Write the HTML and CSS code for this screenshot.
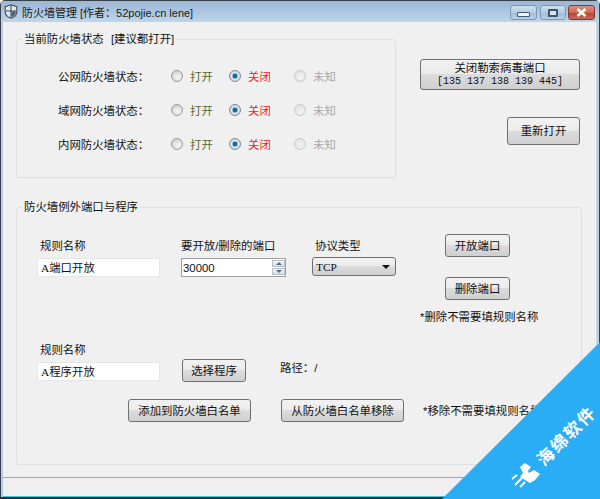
FILE: index.html
```html
<!DOCTYPE html>
<html lang="zh-CN">
<head>
  <meta charset="UTF-8" />
  <title>防火墙管理</title>
  <link rel="stylesheet" href="styles.css">
</head>
<body>
  <div class="window">
    <div class="titlebar">
      <svg class="app-icon" width="14" height="15" viewBox="0 0 14 15">
        <path d="M7 .8 L12.8 2.6 V8 C12.8 11 10 13.2 7 14.2 C4 13.2 1.2 11 1.2 8 V2.6 Z" fill="#dfe7ef" stroke="#3c4a58" stroke-width="1.1"/>
        <path d="M7 1.5 V13.5 M1.8 7 H12.2" stroke="#3c4a58" stroke-width="1.1" fill="none"/>
        <path d="M7.6 7.6 H12 C11.8 10.4 9.6 12.4 7.6 13.2 Z" fill="#4a5a6a"/>
      </svg>
      <span class="title">防火墙管理 [作者：52pojie.cn lene]</span>
      <div class="caption-btns">
        <div class="cap cap-min"><span class="min-bar"></span></div>
        <div class="cap cap-max"><span class="max-box"></span></div>
        <div class="cap cap-close">
          <svg width="13" height="9" viewBox="0 0 13 9"><path d="M2.5 1 L10.5 8 M10.5 1 L2.5 8" stroke="#fff" stroke-width="2.6"/></svg>
        </div>
      </div>
    </div>

    <div class="client">
      <div class="top">
        <fieldset class="group group-status">
          <legend>当前防火墙状态 [建议都打开]</legend>
          <div class="status-row">
            <span class="status-name">公网防火墙状态：</span>
            <span class="opt opt-open"><i class="radio"></i>打开</span>
            <span class="opt opt-close"><i class="radio on"></i>关闭</span>
            <span class="opt opt-unknown"><i class="radio off"></i>未知</span>
          </div>
          <div class="status-row">
            <span class="status-name">域网防火墙状态：</span>
            <span class="opt opt-open"><i class="radio"></i>打开</span>
            <span class="opt opt-close"><i class="radio on"></i>关闭</span>
            <span class="opt opt-unknown"><i class="radio off"></i>未知</span>
          </div>
          <div class="status-row">
            <span class="status-name">内网防火墙状态：</span>
            <span class="opt opt-open"><i class="radio"></i>打开</span>
            <span class="opt opt-close"><i class="radio on"></i>关闭</span>
            <span class="opt opt-unknown"><i class="radio off"></i>未知</span>
          </div>
        </fieldset>
        <div class="top-actions">
          <button class="btn btn-virus">关闭勒索病毒端口<br><span class="ports">[135 137 138 139 445]</span></button>
          <button class="btn btn-reopen">重新打开</button>
        </div>
      </div>

      <fieldset class="group group-ports">
        <legend>防火墙例外端口与程序</legend>
        <div class="port-row">
          <div class="field field-name">
            <label>规则名称</label>
            <div class="textbox">A端口开放</div>
          </div>
          <div class="field field-port">
            <label>要开放/删除的端口</label>
            <div class="textbox spin">
              30000
              <div class="spin-btns">
                <span class="spin-up"></span>
                <span class="spin-down"></span>
              </div>
            </div>
          </div>
          <div class="field field-proto">
            <label>协议类型</label>
            <div class="combo">TCP</div>
          </div>
          <div class="port-actions">
            <button class="btn btn-port">开放端口</button>
            <button class="btn btn-port">删除端口</button>
            <p class="note">*删除不需要填规则名称</p>
          </div>
        </div>

        <div class="prog-row">
          <div class="field field-name">
            <label>规则名称</label>
            <div class="textbox">A程序开放</div>
          </div>
          <button class="btn btn-pick">选择程序</button>
          <span class="path">路径：/</span>
        </div>

        <div class="white-row">
          <button class="btn btn-white">添加到防火墙白名单</button>
          <button class="btn btn-white">从防火墙白名单移除</button>
          <span class="note">*移除不需要填规则名称</span>
        </div>
      </fieldset>
    </div>

    <div class="statusbar"></div>
  </div>

  <svg class="ribbon" width="158" height="157" viewBox="0 0 158 157">
    <polygon points="158,0 158,157 0,157" fill="#29aef5"/>
    <path fill="#fff" d="M78 125 L83 121 L89 125 L86 129 L87 131 L92 128 L98 132 L93 138 L88 141 L83 138 L78 135 L81 131 Z"/>
    <path fill="none" stroke="#fff" stroke-width="1.8" d="M75 133 L70 137 M80 136 L73 143 M83 140 L78 145"/>
    <text class="ribbon-text" transform="translate(102 125) rotate(-45)">海绵软件</text>
  </svg>
</body>
</html>
```

FILE: styles.css
```css
html, body {
  margin: 0;
  padding: 0;
}

body {
  position: relative;
  width: 600px;
  height: 499px;
  overflow: hidden;
  font-family: "Liberation Sans", "Noto Sans CJK SC", sans-serif;
  font-size: 11.4px;
  color: #111;
}

.window {
  box-sizing: border-box;
  width: 600px;
  height: 499px;
  display: flex;
  flex-direction: column;
  border: 1px solid #3a4048;
  border-bottom: 2px solid #2b3138;
  border-radius: 5px 5px 0 0;
  background: #b5cde4;
  padding: 0 2px;
}

/* title bar */
.titlebar {
  height: 21px;
  display: flex;
  align-items: center;
  margin: 0 -2px;
  padding: 0 4px 0 3px;
  background: linear-gradient(to bottom, #9ab7d6, #bfd5ea);
}

.app-icon {
  margin-right: 4px;
}

.title {
  font-size: 11px;
  color: #1a1a1a;
}

.caption-btns {
  margin-left: auto;
  display: flex;
  gap: 2px;
  align-self: flex-start;
  margin-top: 4px;
}

.cap {
  box-sizing: border-box;
  height: 15px;
  display: flex;
  align-items: center;
  justify-content: center;
  border: 1px solid #7d96b4;
  border-radius: 3px;
  background: linear-gradient(to bottom, #cfdfef 0, #b4cbe3 50%, #9fbbd8 51%, #bad0e6 100%);
}

.cap-min { width: 27px; }
.cap-max { width: 26px; margin-left: 1px; }

.cap-close {
  width: 27px;
  border-color: #7d3a30;
  background: linear-gradient(to bottom, #dd8d80 0, #cf6a5a 50%, #b83f2e 51%, #cc6a58 100%);
}

.min-bar {
  width: 11px;
  height: 3px;
  margin-top: 3px;
  background: #eef2f6;
  border: 1px solid #44566b;
  border-radius: 1px;
}

.max-box {
  box-sizing: border-box;
  width: 10px;
  height: 8px;
  background: #d8e2ec;
  border: 2px solid #44566b;
  border-radius: 1px;
}

/* client area */
.client {
  flex: 1;
  background: #f0f0f0;
  padding: 10px 13px 0;
  border-right: 1px solid #d0dbe6;
}

.top {
  display: flex;
  align-items: flex-start;
}

.group {
  box-sizing: border-box;
  margin: 0;
  padding: 0;
  border: 1px solid #dde0e3;
  border-radius: 3px;
}

.group legend {
  margin-left: 5px;
  padding: 0 2px;
  line-height: 14px;
  font-size: 11.4px;
  word-spacing: 4px;
}

/* status group */
.group-status {
  width: 380px;
  height: 146px;
  padding-top: 23px;
}

.status-row {
  display: flex;
  align-items: center;
  height: 14px;
  margin-bottom: 20px;
}

.status-name {
  width: 113px;
  margin-left: 41px;
}

.opt {
  display: flex;
  align-items: center;
  gap: 7px;
}

.opt-open { width: 58px; color: #55683a; }
.opt-close { width: 65px; color: #ec1c24; }
.opt-unknown { color: #a8a8a8; }

.radio {
  box-sizing: border-box;
  width: 12px;
  height: 12px;
  border-radius: 50%;
  border: 1px solid #9a9a9a;
  background: radial-gradient(circle at 60% 65%, #f6f6f6 0, #e2e2e2 45%, #c4c4c4 100%);
}

.radio.on {
  border-color: #7a8a98;
  background: radial-gradient(circle, #1478b4 0, #0e5f94 28%, #7fb6d6 34%, #dfe4e8 50%, #c2c6ca 100%);
}

.radio.off {
  opacity: .45;
}

.top-actions {
  display: flex;
  flex-direction: column;
  align-items: flex-end;
  width: 160px;
  margin-left: 24px;
  padding-top: 27px;
}

/* buttons */
.btn {
  box-sizing: border-box;
  padding: 0;
  border: 1px solid #707070;
  border-radius: 3px;
  background: linear-gradient(to bottom, #f2f2f2 0, #ebebeb 48%, #dcdcdc 50%, #cfcfcf 100%);
  font: inherit;
  color: #111;
  line-height: 12px;
}

.btn-virus {
  width: 160px;
  height: 31px;
}

.ports {
  font-family: "Liberation Mono", monospace;
  font-size: 10px;
}

.btn-reopen {
  width: 73px;
  height: 28px;
  margin-top: 27px;
}

/* ports group */
.group-ports {
  width: 566px;
  height: 265px;
  margin-top: 22px;
  padding-top: 20px;
}

.port-row {
  display: flex;
  height: 104px;
  margin-left: 20px;
}

.field {
  display: flex;
  flex-direction: column;
  margin-top: 5px;
}

.field label {
  margin-left: 3px;
  line-height: 14px;
  margin-bottom: 5px;
}

.field-name { width: 123px; }
.field-port { width: 105px; margin-left: 21px; }
.field-port label { margin-left: 0; }
.field-proto { width: 84px; margin-left: 26px; }

.textbox {
  box-sizing: border-box;
  height: 19px;
  line-height: 19px;
  padding-left: 3px;
  font-family: "Liberation Serif", "Noto Sans CJK SC", serif;
  background: #fff;
  border: 1px solid #e6e6e6;
}

.spin {
  position: relative;
  border-color: #a0a0a0;
  padding-left: 1px;
  font-family: "Liberation Sans", sans-serif;
}

.spin-btns {
  position: absolute;
  top: 1px;
  right: 0;
  width: 13px;
  height: 15px;
  display: flex;
  flex-direction: column;
  gap: 1px;
}

.spin-btns span {
  flex: 1;
  display: flex;
  align-items: center;
  justify-content: center;
  background: linear-gradient(to bottom, #f4f6f8, #d6dde4);
  border: 1px solid #b8c0c8;
}

.spin-up::before,
.spin-down::before {
  content: "";
  border-left: 3px solid transparent;
  border-right: 3px solid transparent;
}

.spin-up::before { border-bottom: 3px solid #5a6a80; }
.spin-down::before { border-top: 3px solid #5a6a80; }

.combo {
  position: relative;
  box-sizing: border-box;
  height: 19px;
  margin-top: -1px;
  line-height: 18px;
  padding-left: 3px;
  font-family: "Liberation Serif", serif;
  border: 1px solid #707070;
  border-radius: 3px;
  background: linear-gradient(to bottom, #f2f2f2 0, #ebebeb 48%, #dcdcdc 50%, #cfcfcf 100%);
}

.combo::after {
  content: "";
  position: absolute;
  right: 5px;
  top: 7px;
  border-left: 4px solid transparent;
  border-right: 4px solid transparent;
  border-top: 4px solid #111;
}

.port-actions {
  width: 130px;
  margin-left: 24px;
}

.btn-port {
  display: block;
  width: 65px;
  height: 23px;
  margin-left: 25px;
  margin-bottom: 20px;
}

.note {
  margin: -10px 0 0;
  line-height: 14px;
  white-space: nowrap;
}

.prog-row {
  display: flex;
  align-items: flex-start;
  height: 61px;
  margin-left: 20px;
}

.btn-pick {
  width: 64px;
  height: 23px;
  margin-top: 21px;
  margin-left: 22px;
}

.path {
  margin-left: 34px;
  margin-top: 23px;
  line-height: 14px;
}

.white-row {
  display: flex;
  align-items: center;
  margin-left: 111px;
}

.btn-white {
  width: 123px;
  height: 23px;
  margin-right: 30px;
}

.white-row .btn-white:nth-child(2) {
  margin-right: 19px;
}

.white-row .note {
  margin: 0;
}

/* status bar */
.statusbar {
  height: 18px;
  background: #f0eeee;
  border-top: 1px solid #a8a8a8;
  border-bottom: 1px solid #45c3dc;
  margin-right: -1px;
}

/* corner ribbon, sits over the window */
.ribbon {
  position: absolute;
  right: 0;
  bottom: 0;
}

.ribbon-text {
  font-family: "Noto Sans CJK SC", sans-serif;
  font-size: 17px;
  font-weight: 700;
  letter-spacing: 2px;
  fill: #fff;
}
```
